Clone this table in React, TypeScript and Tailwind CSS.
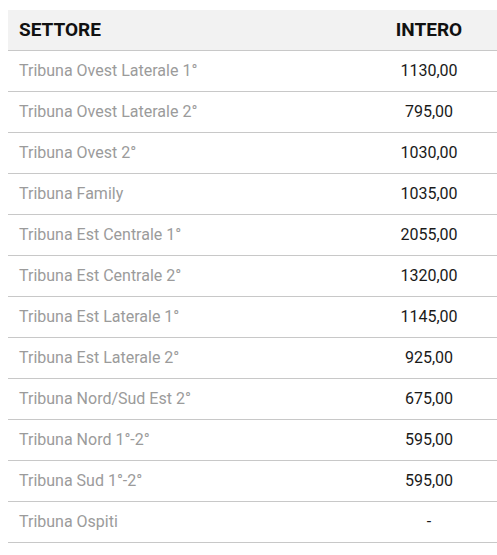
import React from 'react';

const rows = [
  { settore: "Tribuna Ovest Laterale 1°", intero: "1130,00" },
  { settore: "Tribuna Ovest Laterale 2°", intero: "795,00" },
  { settore: "Tribuna Ovest 2°", intero: "1030,00" },
  { settore: "Tribuna Family", intero: "1035,00" },
  { settore: "Tribuna Est Centrale 1°", intero: "2055,00" },
  { settore: "Tribuna Est Centrale 2°", intero: "1320,00" },
  { settore: "Tribuna Est Laterale 1°", intero: "1145,00" },
  { settore: "Tribuna Est Laterale 2°", intero: "925,00" },
  { settore: "Tribuna Nord/Sud Est 2°", intero: "675,00" },
  { settore: "Tribuna Nord 1°-2°", intero: "595,00" },
  { settore: "Tribuna Sud 1°-2°", intero: "595,00" },
  { settore: "Tribuna Ospiti", intero: "-" },
];

const App: React.FC = () => {
  return (
    <div className="bg-white min-h-screen pt-[10px] pl-[8px] font-['Roboto',sans-serif]">
      <div className="w-[489px]">
        <div className="grid grid-cols-[353px_136px] h-[41px] bg-[#f2f2f2] border-b border-[#c8c8c8] items-center">
          <span className="pl-[11px] text-[19px] font-bold text-[#111]">SETTORE</span>
          <span className="text-center text-[19px] font-bold text-[#111]">INTERO</span>
        </div>
        {rows.map((row) => (
          <div
            key={row.settore}
            className="grid grid-cols-[353px_136px] h-[41px] border-b border-[#c8c8c8] items-center text-[16px]"
          >
            <span className="pl-[11px] text-[#9b9b9b]">{row.settore}</span>
            <span className="text-center text-[#1a1a1a]">{row.intero}</span>
          </div>
        ))}
      </div>
    </div>
  );
};

export default App;
